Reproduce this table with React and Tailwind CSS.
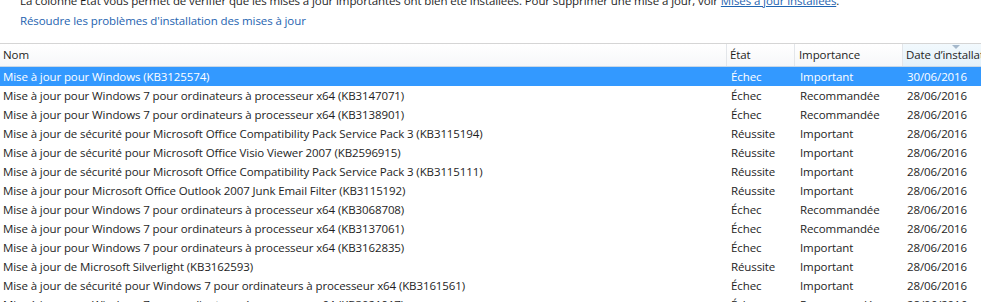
import React from 'react';

const rows = [
  ['Mise à jour pour Windows (KB3125574)', 'Échec', 'Important', '30/06/2016'],
  ['Mise à jour pour Windows 7 pour ordinateurs à processeur x64 (KB3147071)', 'Échec', 'Recommandée', '28/06/2016'],
  ['Mise à jour pour Windows 7 pour ordinateurs à processeur x64 (KB3138901)', 'Échec', 'Recommandée', '28/06/2016'],
  ['Mise à jour de sécurité pour Microsoft Office Compatibility Pack Service Pack 3 (KB3115194)', 'Réussite', 'Important', '28/06/2016'],
  ['Mise à jour de sécurité pour Microsoft Office Visio Viewer 2007 (KB2596915)', 'Réussite', 'Important', '28/06/2016'],
  ['Mise à jour de sécurité pour Microsoft Office Compatibility Pack Service Pack 3 (KB3115111)', 'Réussite', 'Important', '28/06/2016'],
  ['Mise à jour pour Microsoft Office Outlook 2007 Junk Email Filter (KB3115192)', 'Réussite', 'Important', '28/06/2016'],
  ['Mise à jour pour Windows 7 pour ordinateurs à processeur x64 (KB3068708)', 'Échec', 'Recommandée', '28/06/2016'],
  ['Mise à jour pour Windows 7 pour ordinateurs à processeur x64 (KB3137061)', 'Échec', 'Recommandée', '28/06/2016'],
  ['Mise à jour pour Windows 7 pour ordinateurs à processeur x64 (KB3162835)', 'Échec', 'Important', '28/06/2016'],
  ['Mise à jour de Microsoft Silverlight (KB3162593)', 'Réussite', 'Important', '28/06/2016'],
  ['Mise à jour de sécurité pour Windows 7 pour ordinateurs à processeur x64 (KB3161561)', 'Échec', 'Important', '28/06/2016'],
  ['Mise à jour pour Windows 7 pour ordinateurs à processeur x64 (KB3021917)', 'Échec', 'Recommandée', '28/06/2016'],
];

const App = () => {
  return (
    <div className="w-[981px] h-[302px] overflow-hidden bg-white text-[11.5px] tracking-[-0.1px] text-[#1e1e1e] font-['Open_Sans','Noto_Sans',sans-serif]">
      <div className="pl-5 h-[42px] -mt-[7px]">
        <p className="leading-[16px] whitespace-nowrap">
          La colonne État vous permet de vérifier que les mises à jour importantes ont bien été installées. Pour supprimer une mise à jour, voir{' '}
          <a href="#" className="text-[#1e63b0] underline">Mises à jour installées</a>.
        </p>
        <a href="#" className="block mt-[4px] leading-[16px] text-[#1e63b0]">
          Résoudre les problèmes d'installation des mises à jour
        </a>
      </div>

      <div className="mt-[8px] border-t border-[#d5d5d5]">
        <div className="flex h-[23px] border-b border-[#c9d8e6] bg-gradient-to-b from-white to-[#f6f7f9]">
          <div className="w-[727px] pl-[3px] flex items-center border-r border-[#e3e6ea]">Nom</div>
          <div className="w-[68px] pl-[3px] flex items-center border-r border-[#e3e6ea]">État</div>
          <div className="w-[108px] pl-[4px] flex items-center border-r border-[#e3e6ea]">Importance</div>
          <div className="relative flex-1 pl-[3px] flex items-center whitespace-nowrap overflow-hidden bg-gradient-to-b from-[#f2f9fd] to-[#e4f1fa]">
            Date d’installation
            <span className="absolute top-[1px] left-[49px] w-0 h-0 border-l-[4px] border-r-[4px] border-t-[4px] border-l-transparent border-r-transparent border-t-[#a5b8cb]" />
          </div>
        </div>
        {rows.map((r, i) => (
          <div
            key={i}
            className={`flex h-[19px] items-center whitespace-nowrap ${i === 0 ? 'bg-[#3399ff] text-white' : ''}`}
          >
            <div className="w-[728px] pl-[3px] overflow-hidden">{r[0]}</div>
            <div className="w-[68px] pl-[3px]">{r[1]}</div>
            <div className="w-[108px] pl-[4px]">{r[2]}</div>
            <div className="flex-1 pl-[3px]">{r[3]}</div>
          </div>
        ))}
      </div>
    </div>
  );
};

export default App;
